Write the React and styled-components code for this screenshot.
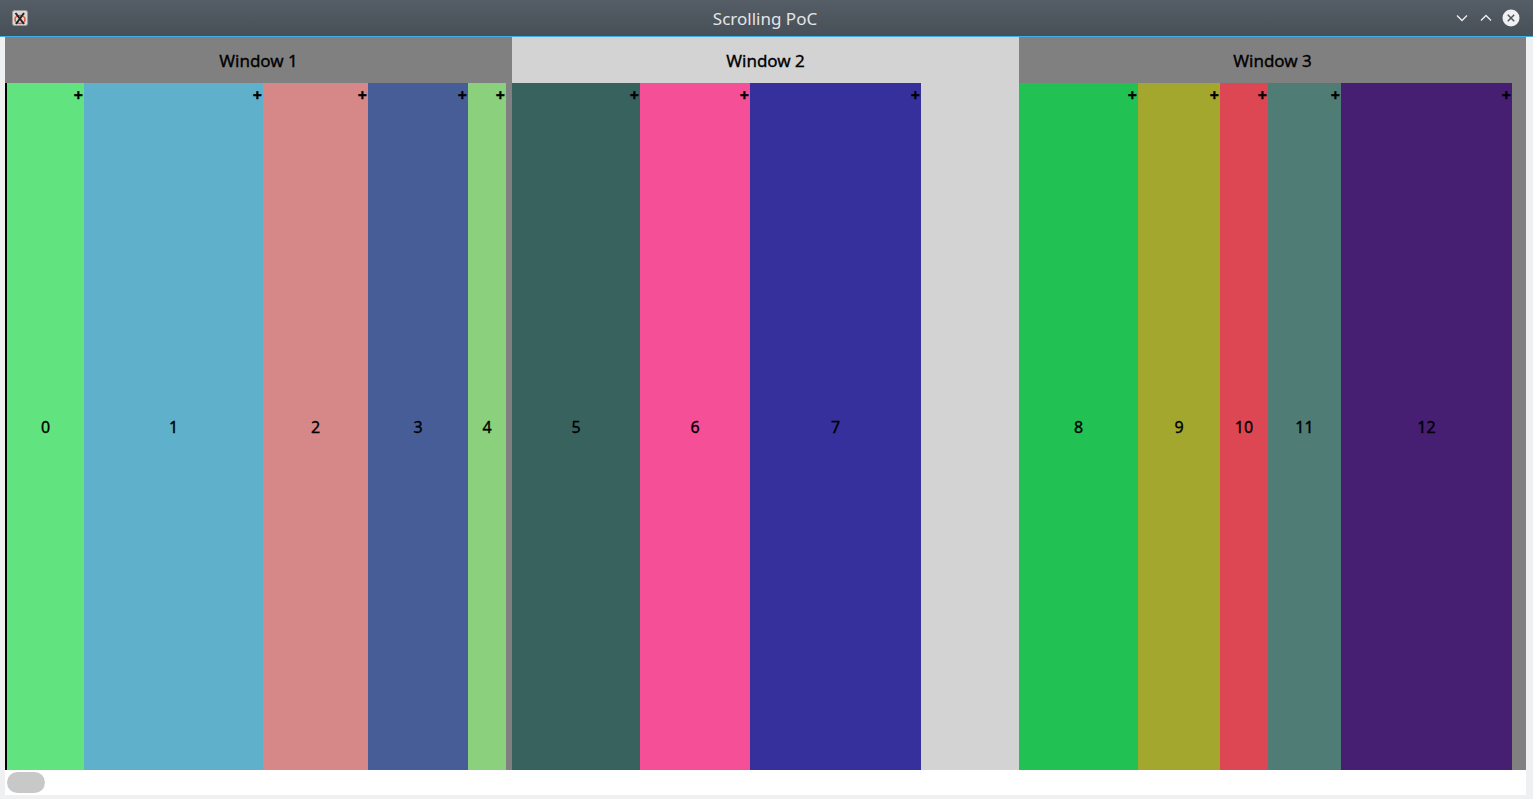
import React from "react";
import styled, { createGlobalStyle } from "styled-components";

const GlobalStyle = createGlobalStyle`
  html, body {
    margin: 0;
    padding: 0;
    background: #eff0f1;
    font-family: "Noto Sans", "DejaVu Sans", sans-serif;
  }
`;

const windows = [
  {
    title: "Window 1",
    bg: "#808080",
    columns: [
      { id: 0, width: 77, color: "#61e37f", focused: true },
      { id: 1, width: 179, color: "#5eb0cb" },
      { id: 2, width: 105, color: "#d68888" },
      { id: 3, width: 100, color: "#475d98" },
      { id: 4, width: 38, color: "#8bd07c" },
    ],
  },
  {
    title: "Window 2",
    bg: "#d3d3d3",
    columns: [
      { id: 5, width: 128, color: "#38625e" },
      { id: 6, width: 110, color: "#f54f98" },
      { id: 7, width: 171, color: "#35309b" },
    ],
  },
  {
    title: "Window 3",
    bg: "#808080",
    columns: [
      { id: 8, width: 119, color: "#21c153" },
      { id: 9, width: 82, color: "#a3a72d" },
      { id: 10, width: 48, color: "#dd4653" },
      { id: 11, width: 73, color: "#507c76" },
      { id: 12, width: 171, color: "#461e72" },
    ],
  },
];

export default function App() {
  return (
    <>
      <GlobalStyle />
      <Frame>
        <TitleBar>
          <AppIcon>
            <svg width="16" height="16" viewBox="0 0 16 16">
              <rect x="0.5" y="0.5" width="15" height="15" rx="2" fill="#d8d8d8" stroke="#9a9a9a" />
              <ellipse cx="8" cy="9.5" rx="5" ry="4" fill="none" stroke="#e0573a" strokeWidth="1.6" />
              <path d="M3.5 3 L12 14 M12 3 L4 14" stroke="#222" strokeWidth="2" />
            </svg>
          </AppIcon>
          <Title>Scrolling PoC</Title>
          <Controls>
            <CtrlButton>
              <svg width="14" height="14" viewBox="0 0 14 14">
                <path d="M2 4.5 L7 9.5 L12 4.5" fill="none" stroke="#eff0f1" strokeWidth="1.3" />
              </svg>
            </CtrlButton>
            <CtrlButton>
              <svg width="14" height="14" viewBox="0 0 14 14">
                <path d="M2 9.5 L7 4.5 L12 9.5" fill="none" stroke="#eff0f1" strokeWidth="1.3" />
              </svg>
            </CtrlButton>
            <CloseButton>
              <svg width="18" height="18" viewBox="0 0 18 18">
                <circle cx="9" cy="9" r="8.5" fill="#eff0f1" />
                <path d="M5.8 5.8 L12.2 12.2 M12.2 5.8 L5.8 12.2" stroke="#4d555d" strokeWidth="1.5" />
              </svg>
            </CloseButton>
          </Controls>
        </TitleBar>
        <Body>
          <Strip>
            {windows.map((w) => (
              <Window key={w.title} $bg={w.bg}>
                <WindowHeader>{w.title}</WindowHeader>
                <ColumnRow>
                  {w.columns.map((c) => (
                    <Column key={c.id} $width={c.width} $color={c.color} $focused={c.focused}>
                      <Plus>+</Plus>
                      {c.id}
                    </Column>
                  ))}
                </ColumnRow>
              </Window>
            ))}
          </Strip>
          <ScrollTrack>
            <ScrollThumb />
          </ScrollTrack>
        </Body>
      </Frame>
    </>
  );
}

const Frame = styled.div`
  width: 1533px;
  height: 799px;
  display: flex;
  flex-direction: column;
  background: #eff0f1;
  overflow: hidden;
`;

const TitleBar = styled.div`
  height: 36px;
  flex-shrink: 0;
  display: flex;
  align-items: center;
  padding: 0 13px 0 12px;
  background: linear-gradient(#555d66, #474f57);
  border-bottom: 1px solid #3daee9;
`;

const AppIcon = styled.div`
  width: 16px;
  height: 16px;
  display: flex;
`;

const Title = styled.div`
  flex: 1;
  text-align: center;
  color: #e3e5e7;
  font-size: 17px;
  padding-left: 48px;
`;

const Controls = styled.div`
  display: flex;
  align-items: center;
  gap: 8px;
`;

const CtrlButton = styled.div`
  width: 16px;
  height: 18px;
  display: flex;
  align-items: center;
  justify-content: center;
`;

const CloseButton = styled(CtrlButton)`
  width: 18px;
`;

const Body = styled.div`
  flex: 1;
  display: flex;
  flex-direction: column;
  padding: 0 7px 4px 5px;
  min-height: 0;
`;

const Strip = styled.div`
  flex: 1;
  display: flex;
  min-height: 0;
`;

const Window = styled.div`
  width: 507px;
  flex-shrink: 0;
  display: flex;
  flex-direction: column;
  background: ${(p) => p.$bg};
`;

const WindowHeader = styled.div`
  height: 46px;
  flex-shrink: 0;
  display: flex;
  align-items: center;
  justify-content: center;
  font-size: 17px;
  color: #000;
  -webkit-text-stroke: 0.35px #000;
`;

const ColumnRow = styled.div`
  flex: 1;
  display: flex;
`;

const Column = styled.div`
  position: relative;
  width: ${(p) => p.$width}px;
  flex-shrink: 0;
  background: ${(p) => p.$color};
  border-left: ${(p) => (p.$focused ? "2px solid #000" : "none")};
  display: flex;
  align-items: center;
  justify-content: center;
  font-size: 16px;
  color: #000;
  -webkit-text-stroke: 0.35px #000;
`;

const Plus = styled.span`
  position: absolute;
  top: 4px;
  right: 1px;
  font-size: 16px;
  font-weight: 700;
  line-height: 1;
`;

const ScrollTrack = styled.div`
  height: 25px;
  flex-shrink: 0;
  background: #fff;
  display: flex;
  align-items: center;
  padding-left: 2px;
`;

const ScrollThumb = styled.div`
  width: 38px;
  height: 21px;
  border-radius: 11px;
  background: #c8c8c8;
`;
